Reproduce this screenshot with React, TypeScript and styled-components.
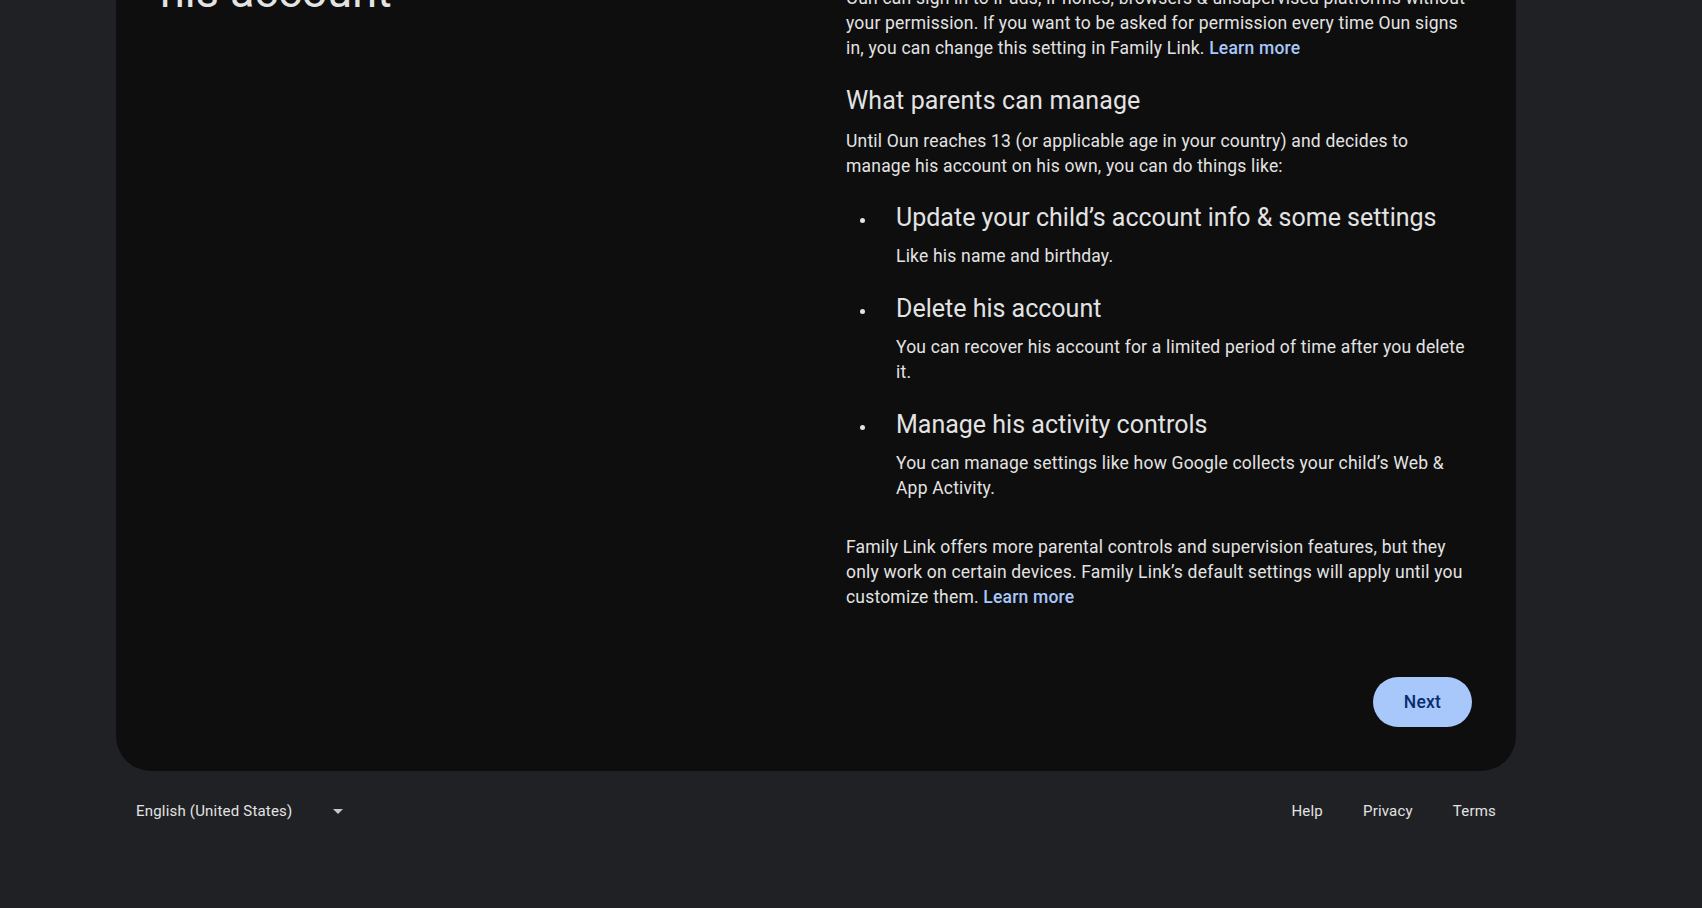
import React from 'react';
import styled, { createGlobalStyle } from 'styled-components';

const GlobalStyle = createGlobalStyle`
    html, body {
        margin: 0;
        padding: 0;
        background: #202124;
        overflow: hidden;
    }
    body {
        font-family: Roboto, "Liberation Sans", Arial, sans-serif;
        color: #e3e3e3;
        -webkit-font-smoothing: antialiased;
    }
`;

const Page = styled.div`
    width: 1400px;
    margin: -78.5px 0 0 116px;
`;

const Card = styled.main`
    background: #0e0e0e;
    border-radius: 35px;
    padding: 44px;
    display: grid;
    grid-template-columns: 1fr 626px;
    column-gap: 60px;
`;

const Title = styled.h1`
    margin: 0;
    font-size: 45px;
    line-height: 52px;
    font-weight: 400;
    color: #e3e3e3;
`;

const Content = styled.section`
    display: flex;
    flex-direction: column;
`;

const Text = styled.p<{ $top?: number }>`
    margin: ${(p) => p.$top ?? 0}px 0 0;
    font-size: 17.5px;
    line-height: 25px;
    letter-spacing: 0.2px;
`;

const Link = styled.a`
    color: #a8c7fa;
    font-weight: 500;
    text-decoration: none;
    cursor: pointer;
`;

const Heading = styled.h2`
    margin: 24.5px 0 0;
    font-size: 25px;
    line-height: 32px;
    font-weight: 400;
    letter-spacing: 0.15px;
`;

const List = styled.ul`
    list-style: none;
    margin: 23.5px 0 0;
    padding: 0;
    display: flex;
    flex-direction: column;
    gap: 24px;
`;

const Item = styled.li`
    display: grid;
    grid-template-columns: 50px 1fr;
`;

const Dot = styled.span`
    width: 5.5px;
    height: 5.5px;
    border-radius: 50%;
    background: #e3e3e3;
    margin: 15.5px 0 0 13.5px;
`;

const ItemTitle = styled.h3`
    margin: 0;
    font-size: 25px;
    line-height: 32px;
    font-weight: 400;
`;

const ItemText = styled.p`
    margin: 10px 0 0;
    font-size: 17.5px;
    line-height: 25px;
    letter-spacing: 0.2px;
`;

const Actions = styled.div`
    display: flex;
    justify-content: flex-end;
    margin-top: 67.5px;
`;

const NextButton = styled.button`
    height: 50px;
    padding: 0 31px;
    border: none;
    border-radius: 25px;
    background: #a8c7fa;
    color: #062e6f;
    font-family: inherit;
    font-size: 17.5px;
    font-weight: 500;
    letter-spacing: 0.2px;
    cursor: pointer;
`;

const Footer = styled.footer`
    display: flex;
    justify-content: space-between;
    align-items: center;
    padding-top: 16px;
`;

const LanguageSelect = styled.div`
    box-sizing: border-box;
    display: flex;
    align-items: center;
    justify-content: space-between;
    width: 247px;
    height: 48px;
    padding: 0 20px;
    font-size: 15px;
    letter-spacing: 0.2px;
`;

const Caret = styled.span`
    width: 0;
    height: 0;
    border-left: 5px solid transparent;
    border-right: 5px solid transparent;
    border-top: 5px solid #c4c7c5;
`;

const FooterLinks = styled.nav`
    display: flex;
`;

const FooterLink = styled.a`
    display: flex;
    align-items: center;
    height: 48px;
    padding: 0 20px;
    font-size: 15px;
    letter-spacing: 0.2px;
    color: #e3e3e3;
    text-decoration: none;
`;

const items = [
    {
        title: 'Update your child\u2019s account info & some settings',
        text: 'Like his name and birthday.',
    },
    {
        title: 'Delete his account',
        text: 'You can recover his account for a limited period of time after you delete it.',
    },
    {
        title: 'Manage his activity controls',
        text: 'You can manage settings like how Google collects your child\u2019s Web & App Activity.',
    },
];

function App() {
    return (
        <>
            <GlobalStyle />
            <Page>
                <Card>
                    <Title>his account</Title>
                    <Content>
                        <Text $top={20}>
                            Oun can sign in to iPads, iPhones, browsers &amp; unsupervised platforms without
                            your permission. If you want to be asked for permission every time Oun signs
                            in, you can change this setting in Family Link. <Link>Learn more</Link>
                        </Text>
                        <Heading>What parents can manage</Heading>
                        <Text $top={11.5}>
                            Until Oun reaches 13 (or applicable age in your country) and decides to manage
                            his account on his own, you can do things like:
                        </Text>
                        <List>
                            {items.map((item) => (
                                <Item key={item.title}>
                                    <Dot />
                                    <div>
                                        <ItemTitle>{item.title}</ItemTitle>
                                        <ItemText>{item.text}</ItemText>
                                    </div>
                                </Item>
                            ))}
                        </List>
                        <Text $top={33.5}>
                            Family Link offers more parental controls and supervision features, but they
                            only work on certain devices. Family Link&rsquo;s default settings will apply
                            until you customize them. <Link>Learn more</Link>
                        </Text>
                        <Actions>
                            <NextButton>Next</NextButton>
                        </Actions>
                    </Content>
                </Card>
                <Footer>
                    <LanguageSelect>
                        English (United States)
                        <Caret />
                    </LanguageSelect>
                    <FooterLinks>
                        <FooterLink>Help</FooterLink>
                        <FooterLink>Privacy</FooterLink>
                        <FooterLink>Terms</FooterLink>
                    </FooterLinks>
                </Footer>
            </Page>
        </>
    );
}

export default App;
